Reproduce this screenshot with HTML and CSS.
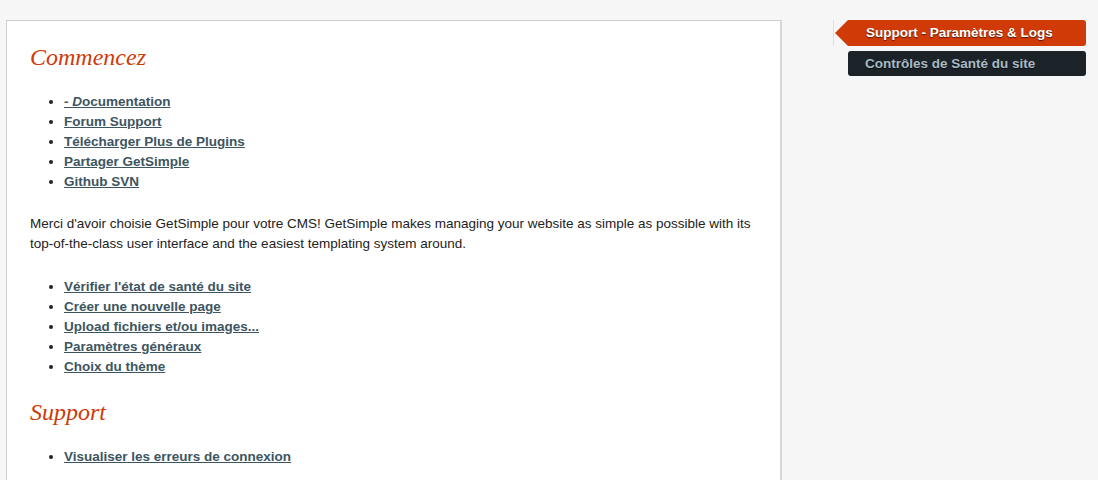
FILE: index.html
```html
<!DOCTYPE html>
<html lang="fr">
<head>
<meta charset="utf-8">
<title>Support</title>
<link rel="stylesheet" href="styles.css">
</head>
<body>
<div class="wrapper">
  <div class="main">
    <h2 class="title">Commencez</h2>
    <ul class="links first">
      <li><a href="#"><em>- D</em>ocumentation</a></li>
      <li><a href="#">Forum Support</a></li>
      <li><a href="#">Télécharger Plus de Plugins</a></li>
      <li><a href="#">Partager GetSimple</a></li>
      <li><a href="#">Github SVN</a></li>
    </ul>
    <p class="intro">Merci d'avoir choisie GetSimple pour votre CMS! GetSimple makes managing your website as simple as possible with its top-of-the-class user interface and the easiest templating system around.</p>
    <ul class="links second">
      <li><a href="#">Vérifier l'état de santé du site</a></li>
      <li><a href="#">Créer une nouvelle page</a></li>
      <li><a href="#">Upload fichiers et/ou images...</a></li>
      <li><a href="#">Paramètres généraux</a></li>
      <li><a href="#">Choix du thème</a></li>
    </ul>
    <h2 class="title second-title">Support</h2>
    <ul class="links third">
      <li><a href="#">Visualiser les erreurs de connexion</a></li>
    </ul>
  </div>
  <div class="sidebar">
    <a class="side-item current" href="#">Support - Paramètres &amp; Logs</a>
    <a class="side-item" href="#">Contrôles de Santé du site</a>
  </div>
</div>
</body>
</html>
```
FILE: styles.css
```css
html, body {
  margin: 0;
  padding: 0;
}
body {
  background: #f6f6f6;
  font-family: "Liberation Sans", Arial, sans-serif;
  font-size: 13.5px;
  color: #222;
}
.wrapper {
  display: flex;
  align-items: flex-start;
  padding-top: 20px;
  padding-left: 6px;
}
.main {
  box-sizing: border-box;
  width: 776px;
  height: 480px;
  background: #fff;
  border: 1px solid #cfcfcf;
  border-right: 2px solid #d6d6d6;
  padding: 23px 23px 0 23px;
}
.title {
  margin: 0;
  font-family: "Liberation Serif", Georgia, serif;
  font-style: italic;
  font-weight: normal;
  font-size: 24px;
  line-height: 26px;
  color: #cf3a06;
}
.second-title {
  margin-top: 22px;
}
.links {
  margin: 22px 0 0 0;
  padding-left: 34px;
  line-height: 20px;
}
.links.second {
  margin-top: 23px;
}
.links a {
  color: #3d5561;
  font-weight: bold;
  text-decoration: underline;
}
.links em {
  font-style: italic;
}
.intro {
  margin: 22px 0 0 0;
  line-height: 20px;
  color: #222;
}
.sidebar {
  margin-left: 51px;
  width: 253px;
  display: flex;
  flex-direction: column;
  gap: 5px;
}
.side-item {
  display: block;
  margin-left: 15px;
  height: 25px;
  line-height: 25px;
  padding-left: 17px;
  border-radius: 3px;
  background: #1b2329;
  color: #a9bac3;
  font-weight: bold;
  font-size: 13.5px;
  text-decoration: none;
  text-shadow: 0 1px 1px rgba(0,0,0,0.6);
}
.side-item.current {
  position: relative;
  height: 26px;
  line-height: 26px;
  background: #cf3a06;
  color: #fff;
  border-radius: 0 3px 3px 0;
  padding-left: 18px;
}
.side-item.current::before {
  content: "";
  position: absolute;
  left: -13px;
  top: 0;
  width: 0;
  height: 0;
  border-top: 13px solid transparent;
  border-bottom: 13px solid transparent;
  border-right: 13px solid #cf3a06;
}
.side-item.current::after {
  content: "";
  position: absolute;
  left: -15px;
  top: 0;
  width: 1px;
  height: 26px;
  background: #ecd9d2;
}
```
